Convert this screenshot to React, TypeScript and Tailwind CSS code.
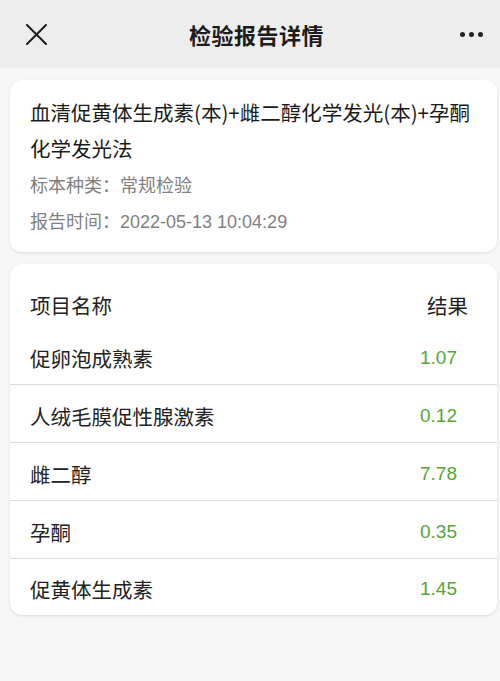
const items = [
  { name: "促卵泡成熟素", value: "1.07" },
  { name: "人绒毛膜促性腺激素", value: "0.12" },
  { name: "雌二醇", value: "7.78" },
  { name: "孕酮", value: "0.35" },
  { name: "促黄体生成素", value: "1.45" },
];

const font = { fontFamily: '"Noto Sans CJK SC", "Liberation Sans", sans-serif' };
const latin = { fontFamily: '"Liberation Sans", sans-serif' };

export default function App() {
  return (
    <div className="min-h-[681px] w-[500px] bg-[#f7f7f7] text-[#1a1a1a]" style={font}>
      {/* Top bar */}
      <div className="flex h-[68px] items-center justify-between bg-[#ededed] pl-[26px] pr-[16px]">
        <svg width="21" height="21" viewBox="0 0 21 21" className="text-[#1c1c1c]">
          <path d="M1 1L20 20M20 1L1 20" stroke="currentColor" strokeWidth="2" strokeLinecap="round" />
        </svg>
        <h1 className="pl-[6px] text-[22px] font-semibold tracking-[0.5px] text-[#1c1c1c]">检验报告详情</h1>
        <div className="flex items-center gap-[4px] pr-[1px]">
          <span className="h-[5px] w-[5px] rounded-full bg-[#222]" />
          <span className="h-[5px] w-[5px] rounded-full bg-[#222]" />
          <span className="h-[5px] w-[5px] rounded-full bg-[#222]" />
        </div>
      </div>

      {/* Report summary */}
      <div className="ml-[10px] mr-[3px] mt-[12px] rounded-[12px] bg-white pb-[12px] pl-[20px] pr-[18px] pt-[14px] shadow-[0_1px_3px_rgba(0,0,0,0.1)]">
        <p className="text-[20.5px] leading-[36px] text-[#1a1a1a]">
          血清促黄体生成素(本)+雌二醇化学发光(本)+孕酮化学发光法
        </p>
        <p className="text-[18px] leading-[36px] text-[#7f7f7f]">标本种类：常规检验</p>
        <p className="text-[18px] leading-[36px] text-[#7f7f7f]">
          报告时间：<span style={latin}>2022-05-13 10:04:29</span>
        </p>
      </div>

      {/* Results table */}
      <div className="ml-[10px] mr-[3px] mt-[12px] overflow-hidden rounded-[12px] bg-white shadow-[0_1px_3px_rgba(0,0,0,0.12)]">
        <div className="flex items-center justify-between pb-[10px] pl-[20px] pr-[29px] pt-[29px] text-[20.5px] leading-[24px] text-[#222]">
          <span>项目名称</span>
          <span>结果</span>
        </div>
        {items.map((item, i) => (
          <div
            key={item.name}
            className={
              i < items.length - 1
                ? "flex h-[58px] items-center justify-between border-b border-[#dcdcdc] pl-[20px] pr-[40px] pt-[6px]"
                : "flex h-[56px] items-center justify-between pl-[20px] pr-[40px] pt-[4px]"
            }
          >
            <span className="text-[20.5px] text-[#222]">{item.name}</span>
            <span className="text-[19px] text-[#55a63a]" style={latin}>
              {item.value}
            </span>
          </div>
        ))}
      </div>
    </div>
  );
}
